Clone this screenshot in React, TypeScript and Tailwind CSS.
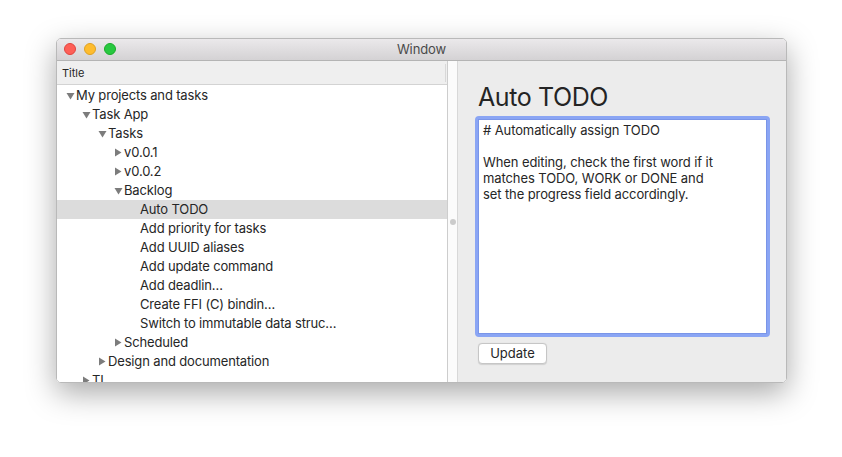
import React from "react";

interface Row {
	label: string;
	level: number;
	state: "open" | "closed" | "leaf";
	selected?: boolean;
}

const rows: Row[] = [
	{ label: "My projects and tasks", level: 0, state: "open" },
	{ label: "Task App", level: 1, state: "open" },
	{ label: "Tasks", level: 2, state: "open" },
	{ label: "v0.0.1", level: 3, state: "closed" },
	{ label: "v0.0.2", level: 3, state: "closed" },
	{ label: "Backlog", level: 3, state: "open" },
	{ label: "Auto TODO", level: 4, state: "leaf", selected: true },
	{ label: "Add priority for tasks", level: 4, state: "leaf" },
	{ label: "Add UUID aliases", level: 4, state: "leaf" },
	{ label: "Add update command", level: 4, state: "leaf" },
	{ label: "Add deadlin…", level: 4, state: "leaf" },
	{ label: "Create FFI (C) bindin…", level: 4, state: "leaf" },
	{ label: "Switch to immutable data struc…", level: 4, state: "leaf" },
	{ label: "Scheduled", level: 3, state: "closed" },
	{ label: "Design and documentation", level: 2, state: "closed" },
	{ label: "TI", level: 1, state: "closed" },
];

const Disclosure: React.FC<{ state: Row["state"] }> = ({ state }) => {
	if (state === "leaf") return <span className="w-[10px] shrink-0" />;
	return (
		<span className="w-[10px] shrink-0 flex items-center">
			{state === "open" ? (
				<svg width="9" height="8" viewBox="0 0 9 8">
					<path d="M0.5 1 L8.5 1 L4.5 7.5 Z" fill="#7c7c7c" />
				</svg>
			) : (
				<svg width="8" height="9" viewBox="0 0 8 9">
					<path d="M1 0.5 L7.5 4.5 L1 8.5 Z" fill="#7c7c7c" />
				</svg>
			)}
		</span>
	);
};

export default function App() {
	return (
		<div className="w-[842px] h-[457px] bg-white overflow-hidden pt-[38px] pl-[56px] font-['Inter','Roboto',sans-serif]">
			<div className="w-[731px] h-[345px] rounded-[5px] overflow-hidden border border-[#b9b9b9] shadow-[0_10px_30px_rgba(0,0,0,0.34)] flex flex-col">
				{/* title bar */}
				<div className="relative h-[22px] shrink-0 bg-gradient-to-b from-[#ebe9eb] to-[#d4d2d4] border-b border-[#b4b4b4] flex items-center justify-center">
					<div className="absolute left-[7px] top-[4px] flex gap-[8px]">
						<span className="w-[12px] h-[12px] rounded-full bg-[#fe5f57] border border-[#e0443e]" />
						<span className="w-[12px] h-[12px] rounded-full bg-[#febc2e] border border-[#dea123]" />
						<span className="w-[12px] h-[12px] rounded-full bg-[#28c840] border border-[#1aab29]" />
					</div>
					<span className="text-[13px] text-[#4a4a4a] tracking-[-0.1px]">Window</span>
				</div>

				<div className="flex flex-1 min-h-0">
					{/* outline pane */}
					<div className="w-[391px] shrink-0 bg-white border-r border-[#cdcdcd] flex flex-col overflow-hidden">
						<div className="h-[24px] shrink-0 bg-[#efefef] border-b border-[#d3d3d3] flex items-center justify-between pl-[5px] pr-[1px]">
							<span className="text-[11px] text-[#262626] pt-[1px]">Title</span>
							<span className="w-px h-[18px] bg-[#d8d8d8]" />
						</div>
						<div className="flex flex-col pt-[1px]">
							{rows.map((r) => (
								<div
									key={r.label}
									className={`h-[19px] shrink-0 flex items-center text-[13px] text-[#262626] tracking-[-0.15px] whitespace-nowrap ${
										r.selected ? "bg-[#dcdcdc]" : ""
									}`}
									style={{ paddingLeft: 9 + r.level * 16 }}>
									<Disclosure state={r.state} />
									<span>{r.label}</span>
								</div>
							))}
						</div>
					</div>

					{/* splitter */}
					<div className="w-[10px] shrink-0 bg-[#fbfbfb] border-r border-[#d8d8d8] flex items-center justify-center">
						<span className="w-[6px] h-[6px] rounded-full bg-[#cbcbcb]" />
					</div>

					{/* detail pane */}
					<div className="flex-1 bg-[#ececec] pt-[21px] pl-[17px] pr-[16px] flex flex-col">
						<h1 className="text-[25px] leading-[30px] text-[#242424] pl-[3px] tracking-[-0.4px]">
							Auto TODO
						</h1>
						<div className="mt-[4px] h-[221px] rounded-[4px] border-[3px] border-[#8aa5f4] bg-white">
							<div className="h-full border border-[#7a95e8] px-[4px] pt-[2px] text-[13px] leading-[16px] text-[#262626] whitespace-pre tracking-[-0.1px]">
								{"# Automatically assign TODO\n\nWhen editing, check the first word if it\nmatches TODO, WORK or DONE and\nset the progress field accordingly."}
							</div>
						</div>
						<div className="mt-[6px] pl-[3px]">
							<button className="w-[69px] h-[21px] bg-white border border-[#c6c6c6] rounded-[4px] shadow-[0_0.5px_1px_rgba(0,0,0,0.12)] text-[13px] text-[#262626] flex items-center justify-center">
								Update
							</button>
						</div>
					</div>
				</div>
			</div>
		</div>
	);
}
